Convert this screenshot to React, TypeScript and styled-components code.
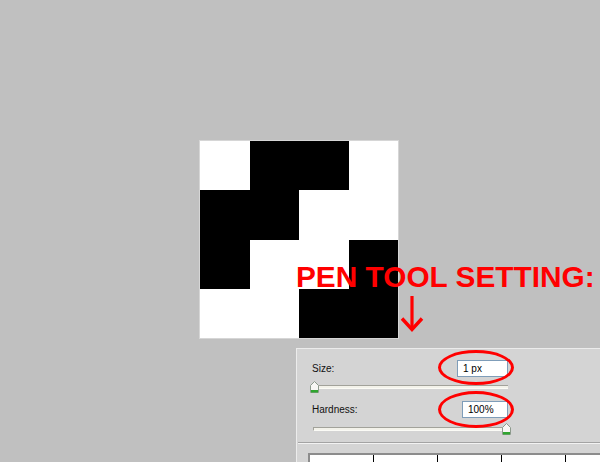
import { FunctionComponent } from "react";
import styled, { createGlobalStyle } from "styled-components";

const GlobalStyle = createGlobalStyle`
    html, body {
        margin: 0;
        padding: 0;
        background: #c0c0c0;
    }
`;

const Stage = styled.div`
    position: relative;
    width: 600px;
    height: 462px;
    overflow: hidden;
    display: flex;
    flex-direction: column;
    background: #c0c0c0;
    font-family: "Liberation Sans", Arial, sans-serif;
`;

const Canvas = styled.div`
    flex: none;
    margin: 141px 0 0 200px;
    width: 198px;
    height: 197px;
    display: grid;
    grid-template-columns: repeat(4, 1fr);
    grid-template-rows: repeat(4, 1fr);
    box-shadow: 0 0 0 1px #d6d6d6;
`;

const Cell = styled.div<{ $on: boolean }>`
    background: ${(p) => (p.$on ? "#000" : "#fff")};
`;

const Panel = styled.div`
    flex: 1;
    margin: 10px 0 0 296px;
    padding: 11px 0 0 15px;
    background: #d4d4d4;
    border-top: 1px solid #ececec;
    border-left: 1px solid #ececec;
`;

const Row = styled.div<{ $top: number }>`
    display: flex;
    align-items: center;
    justify-content: space-between;
    width: 196px;
    height: 17px;
    margin-top: ${(p) => p.$top}px;
`;

const Label = styled.span`
    font-size: 10px;
    line-height: 12px;
    color: #111;
`;

const ValueBox = styled.div<{ $width: number }>`
    box-sizing: border-box;
    width: ${(p) => p.$width}px;
    height: 17px;
    padding-left: 5px;
    border: 1px solid #7f9db9;
    background: #fff;
    font-size: 10px;
    line-height: 15px;
    color: #000;
`;

const Slider = styled.div<{ $top: number }>`
    position: relative;
    display: flex;
    align-items: center;
    width: 195px;
    height: 12px;
    margin: ${(p) => p.$top}px 0 0 1px;
`;

const Track = styled.div`
    box-sizing: border-box;
    width: 100%;
    height: 4px;
    background: #f3f2ea;
    border-top: 1px solid #a2a29a;
    border-left: 1px solid #a2a29a;
    border-bottom: 1px solid #fbfbf6;
`;

const Thumb = styled.svg`
    position: absolute;
    top: 0;
    width: 9px;
    height: 12px;
    margin-left: -4px;
`;

const Divider = styled.div`
    margin: 7px 0 0 -14px;
    height: 0;
    border-top: 1px solid #a3a3a3;
    border-bottom: 1px solid #f2f2f2;
`;

const Preview = styled.div`
    display: flex;
    margin: 9px 0 0 -4px;
    height: 30px;
    background: #fff;
    border-top: 2px solid #8c8c8c;
    border-left: 2px solid #8c8c8c;
`;

const PreviewCell = styled.div`
    flex: none;
    box-sizing: border-box;
    width: 64px;
    border-right: 1px solid #000;
`;

const Title = styled.div`
    position: absolute;
    left: 296px;
    top: 262px;
    font-size: 29.8px;
    line-height: 1;
    font-weight: 700;
    color: #ff0000;
    white-space: nowrap;
`;

const Arrow = styled.svg`
    position: absolute;
    left: 400px;
    top: 295px;
    width: 24px;
    height: 38px;
`;

const Ring = styled.div<{ $top: number; $height: number }>`
    position: absolute;
    left: 438px;
    top: ${(p) => p.$top}px;
    box-sizing: border-box;
    width: 76px;
    height: ${(p) => p.$height}px;
    border: 3px solid #ff0000;
    border-radius: 50%;
`;

const pattern = [
    0, 1, 1, 0,
    1, 1, 0, 0,
    1, 0, 0, 1,
    0, 0, 1, 1,
];

const SliderControl: FunctionComponent<{ value: number; top: number }> = ({ value, top }) => (
    <Slider $top={top}>
        <Track />
        <Thumb viewBox="0 0 9 12" style={{ left: `${value}%` }}>
            <polygon points="0.5,4.5 4.5,0.5 8.5,4.5 8.5,11.5 0.5,11.5" fill="#f7f7f4" stroke="#8c9a8c" />
            <rect x="1" y="9" width="7" height="2.5" fill="#2fa52f" />
        </Thumb>
    </Slider>
);

const App: FunctionComponent = () => {
    return (
        <Stage>
            <GlobalStyle />
            <Canvas>
                {pattern.map((on, i) => (
                    <Cell key={i} $on={on === 1} />
                ))}
            </Canvas>
            <Panel>
                <Row $top={0}>
                    <Label>Size:</Label>
                    <ValueBox $width={51}>1 px</ValueBox>
                </Row>
                <SliderControl value={0.5} top={4} />
                <Row $top={8}>
                    <Label>Hardness:</Label>
                    <ValueBox $width={46}>100%</ValueBox>
                </Row>
                <SliderControl value={99} top={5} />
                <Divider />
                <Preview>
                    {[0, 1, 2, 3, 4].map((i) => (
                        <PreviewCell key={i} />
                    ))}
                </Preview>
            </Panel>
            <Title>PEN TOOL SETTING:</Title>
            <Arrow viewBox="0 0 24 38">
                <line x1="12" y1="1" x2="12" y2="35" stroke="#ff0000" strokeWidth="3.2" />
                <polyline points="2,23.5 12,34.5 22,23.5" fill="none" stroke="#ff0000" strokeWidth="3.4" />
            </Arrow>
            <Ring $top={350} $height={35} />
            <Ring $top={391} $height={37} />
        </Stage>
    );
};

export default App;
